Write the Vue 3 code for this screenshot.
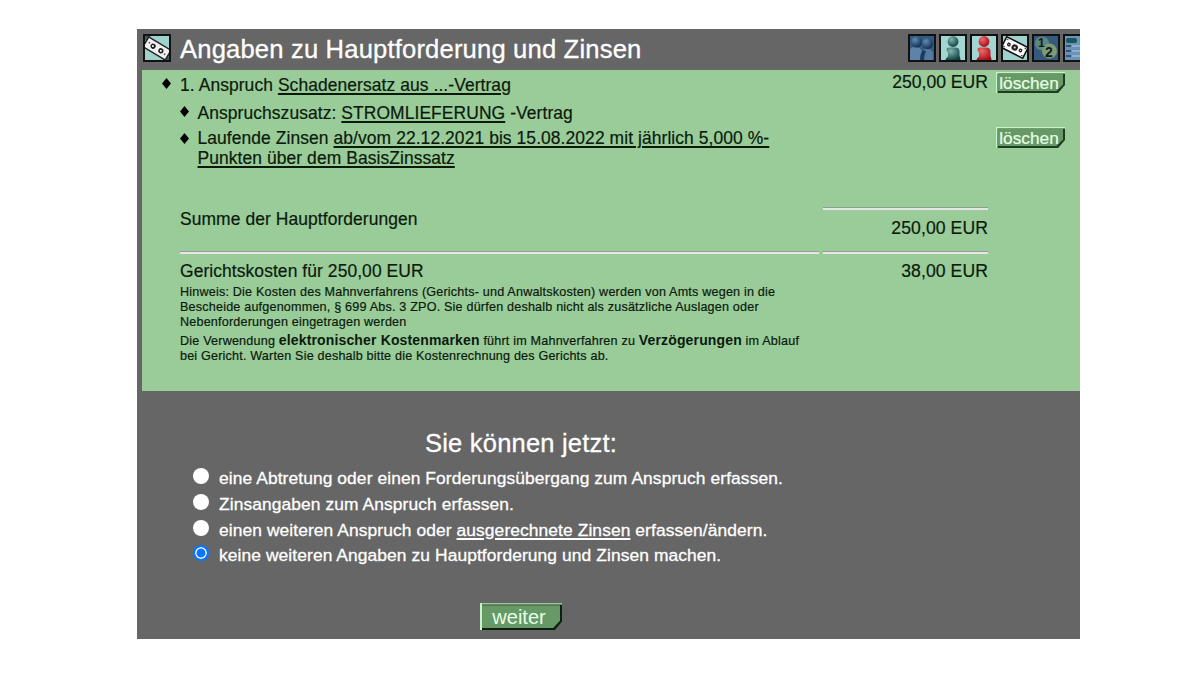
<template>
  <div class="page">
    <div class="frame">
      <header class="head">
        <svg class="icon" viewBox="0 0 28 28">
          <rect x="1" y="1" width="26" height="26" fill="#9fd2cc" />
          <path d="M2 2h6l-6 5zM26 26h-5l5-4z" fill="#3d5f5e" />
          <g transform="translate(14 14.5) rotate(31)">
            <rect x="-13" y="-5.7" width="26" height="11.4" fill="#f1f1f1" stroke="#222" stroke-width="1.5" />
            <circle cx="-4.5" r="2.6" fill="#222" />
            <circle cx="4.5" r="2.6" fill="#222" />
            <circle cx="-4.8" r="1" fill="#fff" />
            <circle cx="4.5" r="1" fill="#fff" />
            <circle cx="9.5" cy="1" r="0.9" fill="#555" />
            <circle cx="-9.5" cy="-1" r="0.9" fill="#555" />
          </g>
          <rect x="1" y="1" width="26" height="26" fill="none" stroke="#111" stroke-width="2" />
        </svg>
        <h1>Angaben zu Hauptforderung und Zinsen</h1>
        <nav class="tools">
          <svg v-for="tool in tools" :key="tool" class="icon" viewBox="0 0 28 28">
            <defs v-if="shades[tool]">
              <radialGradient :id="'ball-' + tool" cx="0.35" cy="0.3" r="0.75">
                <stop offset="0" :stop-color="shades[tool][0]" />
                <stop offset="1" :stop-color="shades[tool][1]" />
              </radialGradient>
            </defs>
            <rect x="1" y="1" width="26" height="26" :fill="backs[tool]" />
            <g v-if="tool === 'gruppe'">
              <path d="M2 26v-9q0-4 5-4t7 4v9z" fill="#5f83a8" />
              <path d="M14 26v-8q0-3 5-3t6 4v7z" fill="#5579a0" />
              <path d="M12 26q0-7 3-10l3 1q-2 4-2 9z" fill="#1a3c60" />
              <circle cx="8.5" cy="8" r="5.6" :fill="'url(#ball-' + tool + ')'" />
              <circle cx="19.5" cy="9.5" r="5.6" :fill="'url(#ball-' + tool + ')'" />
            </g>
            <g v-if="tool === 'person' || tool === 'gegner'" :fill="'url(#ball-' + tool + ')'">
              <circle cx="14" cy="7.5" r="5.4" />
              <path d="M7.5 15.5q0-2 3-2h5.500q4.500 0 4.500 4v4.500q1 2 1 4H6.500q0-2 2.500-3.500v-4q-1.500-1-1.500-3z" />
            </g>
            <g v-if="tool === 'geld'" transform="translate(13.7 13.5) rotate(27)">
              <rect x="-12" y="-6" width="24" height="12" fill="#fafafa" stroke="#111" stroke-width="1.6" />
              <circle r="3.2" fill="#222" />
              <circle cx="-6.5" r="1.9" fill="#222" />
              <circle cx="6.5" r="1.9" fill="#222" />
              <circle r="1" fill="#ddd" />
              <circle cx="-6.5" r="0.6" fill="#ddd" />
              <circle cx="6.5" r="0.6" fill="#ddd" />
              <path d="M-11-4h2M-11 4h2M11-4h-2M11 4h-2" stroke="#444" />
            </g>
            <g v-if="tool === 'zahlen'">
              <circle cx="10" cy="9.5" r="7" fill="#5c8780" />
              <circle cx="17.5" cy="17" r="7.5" fill="#7d9c74" />
              <text x="6" y="13" class="digit">1</text>
              <text x="13" y="23" class="digit two">2</text>
            </g>
            <g v-if="tool === 'liste'">
              <rect x="3" y="4" width="11" height="5" rx="2" fill="#17585e" />
              <path d="M3 12h5M3 17h5M3 22h5" stroke="#1f4062" stroke-width="1.5" />
              <path d="M9 12h14M9 17h14M9 22h14" stroke="#8ab0d0" stroke-width="2" />
            </g>
            <rect x="1" y="1" width="26" height="26" fill="none" stroke="#111" stroke-width="2" />
          </svg>
        </nav>
      </header>

      <main class="claims">
        <div class="row first">
          <span class="mark"></span>
          <span class="label">1. Anspruch <u>Schadenersatz aus ...-Vertrag</u></span>
          <span class="amount">250,00 EUR</span>
          <button class="delete"><span>löschen</span></button>
        </div>
        <div class="row sub second">
          <span class="mark"></span>
          <span class="label">Anspruchszusatz: <u>STROMLIEFERUNG</u> -Vertrag</span>
        </div>
        <div class="row sub third">
          <span class="mark"></span>
          <span class="label">
            <span class="line">Laufende Zinsen <u>ab/vom 22.12.2021 bis 15.08.2022 mit jährlich 5,000 %-</u></span>
            <span class="line"><u>Punkten über dem BasisZinssatz</u></span>
          </span>
          <button class="delete"><span>löschen</span></button>
        </div>

        <div class="sums">
          <div class="left sum">Summe der Hauptforderungen</div>
          <div class="right sum"><hr>250,00 EUR</div>
          <hr>
          <hr>
          <div class="left costs">Gerichtskosten für 250,00 EUR</div>
          <div class="right costs">38,00 EUR</div>
        </div>

        <div class="hint">
          <p>
            <span class="line">Hinweis: Die Kosten des Mahnverfahrens (Gerichts- und Anwaltskosten) werden von Amts wegen in die</span>
            <span class="line">Bescheide aufgenommen, § 699 Abs. 3 ZPO. Sie dürfen deshalb nicht als zusätzliche Auslagen oder</span>
            <span class="line">Nebenforderungen eingetragen werden</span>
          </p>
          <p>
            <span class="line">Die Verwendung <b>elektronischer Kostenmarken</b> führt im Mahnverfahren zu <b>Verzögerungen</b> im Ablauf</span>
            <span class="line last">bei Gericht. Warten Sie deshalb bitte die Kostenrechnung des Gerichts ab.</span>
          </p>
        </div>
      </main>

      <section class="next">
        <h2>Sie können jetzt:</h2>
        <ul>
          <li v-for="(option, index) in options" :key="index" @click="selected = index">
            <span class="radio" :class="{ checked: selected === index }"></span>
            <span class="option">{{ option.text }}<u v-if="option.link">{{ option.link }}</u>{{ option.rest }}</span>
          </li>
        </ul>
        <button class="submit"><span>weiter</span></button>
      </section>
    </div>
  </div>
</template>

<script setup>
import { ref } from 'vue'

const tools = ['gruppe', 'person', 'gegner', 'geld', 'zahlen', 'liste']

const backs = {
  gruppe: '#345a80',
  person: '#a3d6d0',
  gegner: '#a3d6d0',
  geld: '#9fd2cc',
  zahlen: '#365a7c',
  liste: '#6b93b8'
}

// highlight and shadow colour of the figures
const shades = {
  gruppe: ['#5f8bb5', '#0e2c4c'],
  person: ['#7fb5b0', '#123f42'],
  gegner: ['#f06a6a', '#a30d18']
}

const options = [
  { text: 'eine Abtretung oder einen Forderungsübergang zum Anspruch erfassen.' },
  { text: 'Zinsangaben zum Anspruch erfassen.' },
  { text: 'einen weiteren Anspruch oder ', link: 'ausgerechnete Zinsen', rest: ' erfassen/ändern.' },
  { text: 'keine weiteren Angaben zu Hauptforderung und Zinsen machen.' }
]

const selected = ref(3)
</script>

<style>
body {
  margin: 0;
  background: #fff;
}
</style>

<style scoped>
.page {
  box-sizing: border-box;
  width: 1200px;
  height: 675px;
  padding: 29px 120px 0 137px;
  overflow: hidden;
  font-family: "Liberation Sans", Arial, sans-serif;
}

.frame {
  box-sizing: border-box;
  width: 943px;
  height: 610px;
  padding-left: 5px;
  background: #666;
  overflow: hidden;
}

u {
  text-decoration-thickness: 1.5px;
  text-underline-offset: 2px;
}

.head {
  display: flex;
  align-items: flex-start;
  height: 41px;
  overflow: hidden;
}

.icon {
  display: block;
  flex: none;
  width: 28px;
  height: 28px;
  margin: 5px 0 0 1px;
}

h1 {
  margin: 5px 0 0 9px;
  color: #fff;
  font-size: 25.6px;
  font-weight: normal;
  letter-spacing: 0.17px;
  line-height: 30px;
  white-space: nowrap;
  -webkit-text-stroke: 0.3px #fff;
}

.tools {
  display: flex;
  gap: 2px;
  width: 173px;
  margin-left: auto;
  overflow: hidden;
}

.digit {
  font: bold 12px "Liberation Sans", sans-serif;
  fill: #10181c;
}

.two {
  font-size: 14px;
}

.claims {
  box-sizing: border-box;
  height: 321px;
  background: #9c9;
  color: #0c1a0c;
  font-size: 17.45px;
  letter-spacing: 0.08px;
  line-height: 20px;
  -webkit-text-stroke: 0.2px #0c1a0c;
}

.row {
  display: flex;
  align-items: flex-start;
  padding-left: 20px;
  white-space: nowrap;
}

.sub {
  padding-left: 38px;
}

.first {
  height: 28px;
}

.second {
  height: 25px;
}

.third {
  height: 81px;
}

.mark {
  width: 9px;
  height: 11px;
  margin-top: 8px;
  background: #000;
  clip-path: polygon(50% 0, 100% 50%, 50% 100%, 0 50%);
}

.third .mark {
  margin-top: 10px;
}

.label {
  margin: 5px 0 0 9px;
}

.sub .label {
  margin-left: 8.5px;
}

.line {
  display: block;
  white-space: nowrap;
}

.amount {
  margin: 2px 8px 0 auto;
  font-size: 17.6px;
  letter-spacing: 0;
}

.delete,
.submit {
  display: block;
  padding: 0;
  border: 0;
  color: #e6ffe6;
  font-family: inherit;
}

.delete {
  width: 69px;
  height: 21px;
  margin: 2px 15px 0 0;
  background: linear-gradient(#c8f5c8, #c8f5c8) left / 1.5px 100% no-repeat,
    linear-gradient(#c8f5c8, #c8f5c8) top / 100% 1.5px no-repeat, #1d3d22;
  clip-path: polygon(0 0, 100% 0, 100% 62%, 90% 100%, 0 100%);
  -webkit-text-stroke: 0.2px #e6ffe6;
}

.third .delete {
  margin: 4px 15px 0 auto;
}

.delete span,
.submit span {
  display: block;
  background: #669966;
}

.delete span {
  height: 17px;
  margin: 0 2px;
  padding-right: 3px;
  font-size: 17.3px;
  letter-spacing: 0;
  line-height: 19px;
  clip-path: polygon(0 0, 100% 0, 100% 62%, 90% 100%, 0 100%);
}

.sums {
  display: grid;
  grid-template-columns: 639px 165px;
  column-gap: 4px;
  padding-left: 38px;
  white-space: nowrap;
}

hr {
  box-sizing: border-box;
  width: 100%;
  height: 3px;
  margin: 0;
  border: 0;
  border-top: 1px solid #8f9f8f;
  background: #e6e6e6;
}

.sum {
  height: 47px;
}

.left.sum {
  box-sizing: border-box;
  padding-top: 5px;
}

.right {
  text-align: right;
}

.right.sum {
  height: 44px;
  padding-top: 3px;
  font-size: 17.6px;
}

.right.sum hr {
  margin-bottom: 8px;
}

.costs {
  padding-top: 7px;
}

.right.costs {
  font-size: 17.6px;
}

.hint {
  padding-left: 38px;
  font-size: 12.6px;
  letter-spacing: 0.19px;
  line-height: 15px;
}

.hint p {
  margin: 4px 0 3px;
}

.hint p + p {
  margin-top: 3px;
}

.hint b {
  font-size: 14px;
  letter-spacing: 0.15px;
  -webkit-text-stroke: 0;
}

.hint .last {
  letter-spacing: 0.18px;
}

.next {
  color: #fff;
}

h2 {
  margin: 37px 0 10px 283px;
  font-size: 25.5px;
  font-weight: normal;
  letter-spacing: 0.21px;
  line-height: 30px;
  white-space: nowrap;
  -webkit-text-stroke: 0.3px #fff;
}

ul {
  margin: 0;
  padding: 0 0 0 51px;
  list-style: none;
}

li {
  display: flex;
  height: 25.8px;
  white-space: nowrap;
}

.radio {
  box-sizing: border-box;
  width: 16px;
  height: 16px;
  border-radius: 50%;
  background: #fff;
}

.radio.checked {
  border: 2px solid #0a75ff;
  background: #0a75ff;
  box-shadow: inset 0 0 0 1.5px #fff;
}

.option {
  margin-left: 10px;
  font-size: 17.4px;
  letter-spacing: 0.09px;
  line-height: 20px;
  -webkit-text-stroke: 0.3px #fff;
}

.submit {
  width: 82px;
  height: 27px;
  margin: 32px 0 0 338px;
  background: linear-gradient(#c8f5c8, #c8f5c8) left / 2px 100% no-repeat,
    linear-gradient(#c8f5c8, #c8f5c8) top / 100% 1.5px no-repeat, #0d1f10;
  clip-path: polygon(0 0, 100% 0, 100% 68%, 91% 100%, 0 100%);
}

.submit span {
  height: 23px;
  margin: 0 2px;
  padding-right: 4px;
  font-size: 20px;
  line-height: 25px;
  clip-path: polygon(0 0, 100% 0, 100% 68%, 91% 100%, 0 100%);
}
</style>
